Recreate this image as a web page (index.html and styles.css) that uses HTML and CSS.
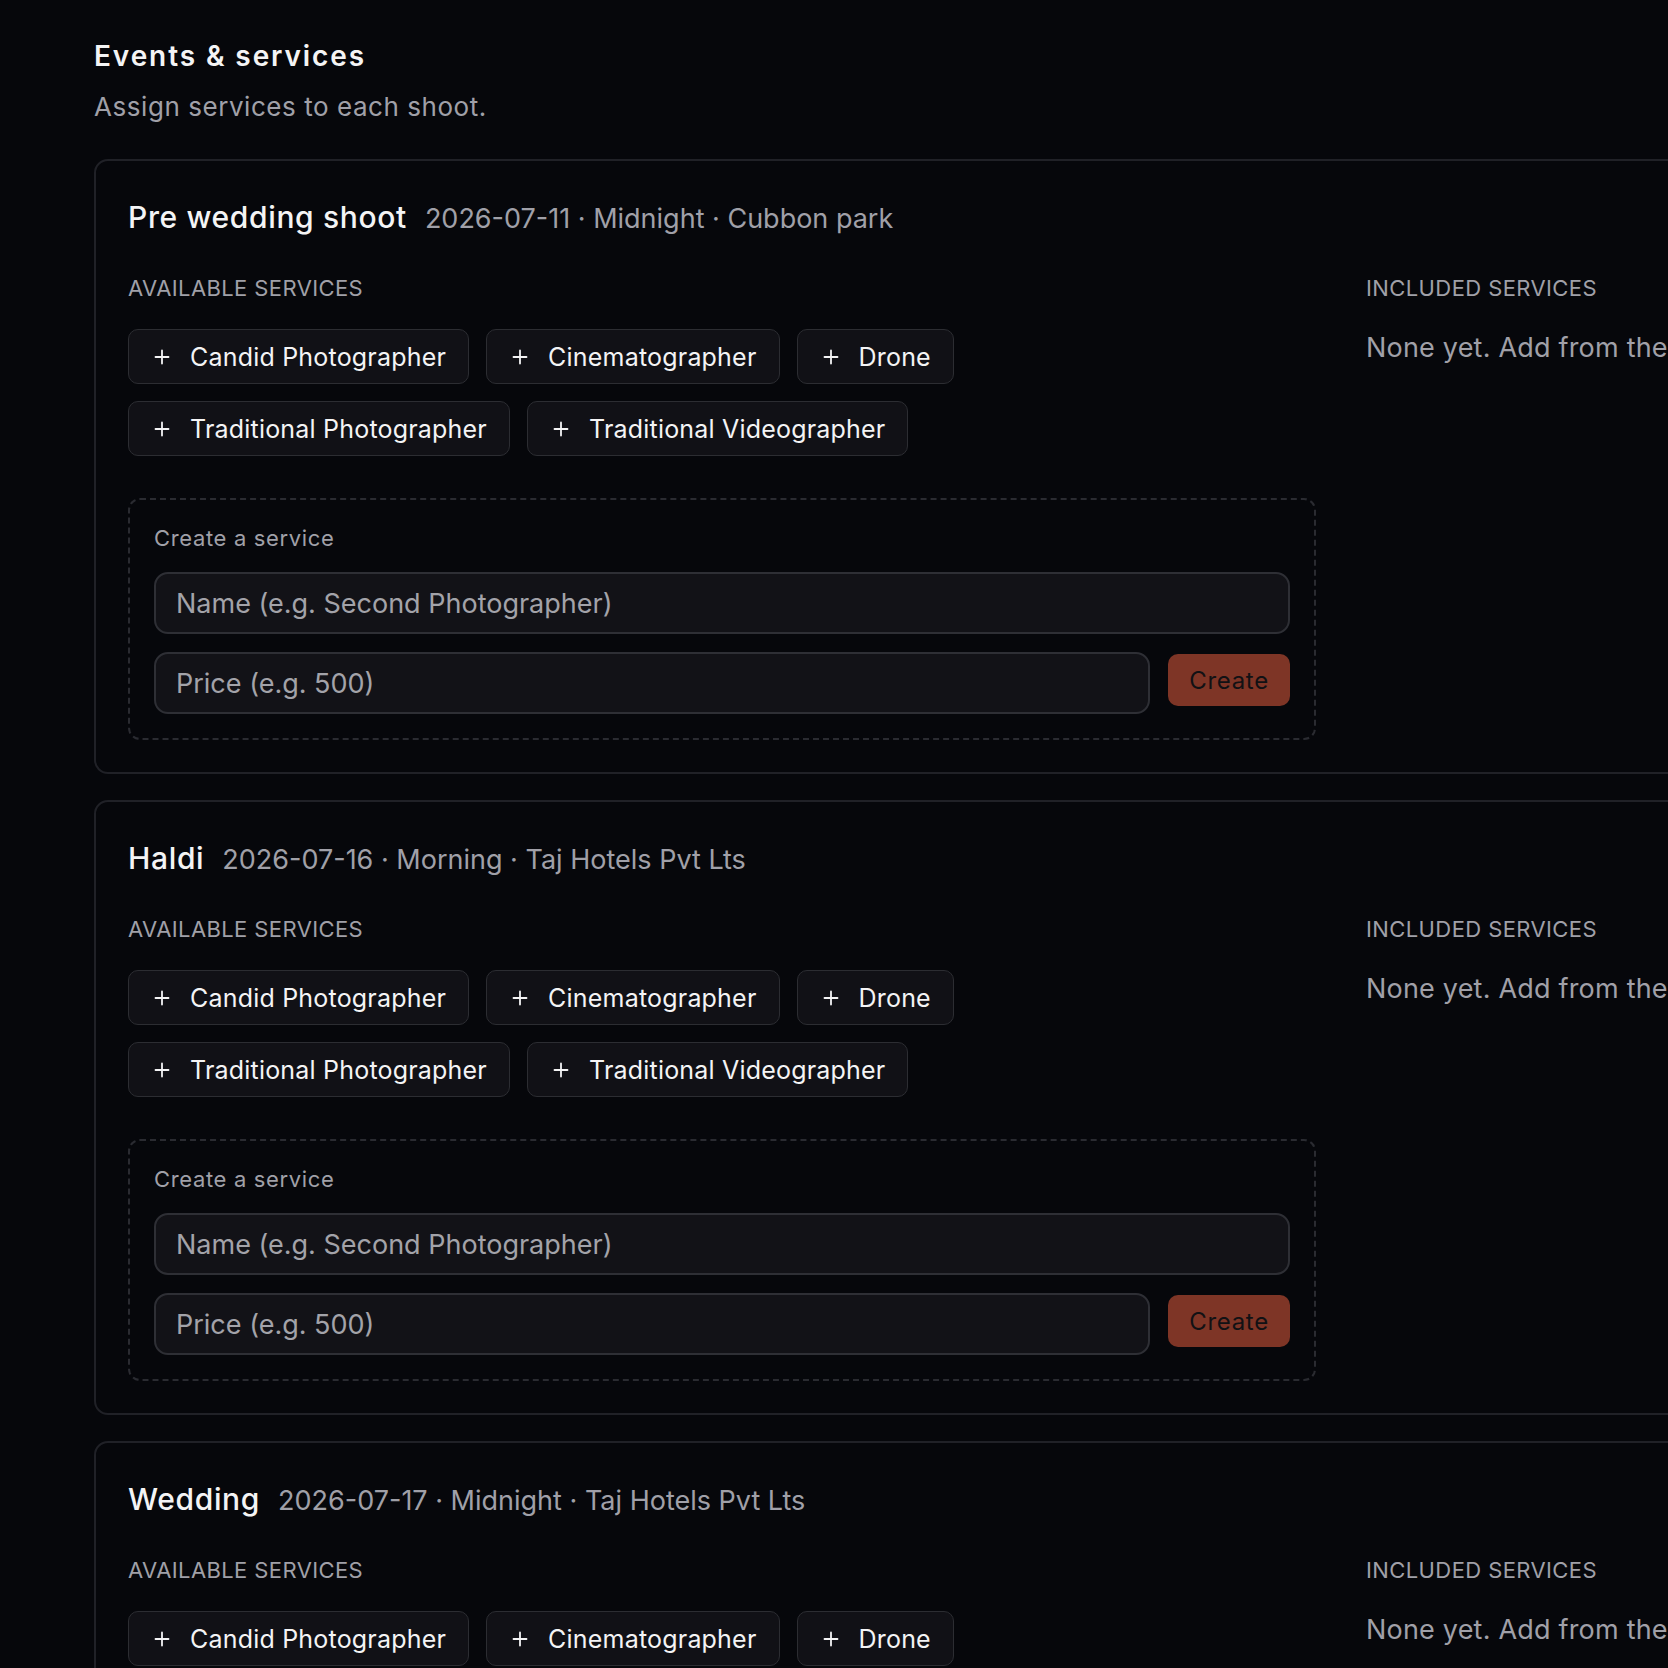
FILE: index.html
```html
<!DOCTYPE html>
<html lang="en">
<head>
    <meta charset="UTF-8">
    <meta name="viewport" content="width=device-width, initial-scale=1.0">
    <title>Events &amp; services</title>
    <link rel="stylesheet" href="styles.css">
    <script>
        const services = [
            'Candid Photographer',
            'Cinematographer',
            'Drone',
            'Traditional Photographer',
            'Traditional Videographer'
        ];

        const events = [
            { name: 'Pre wedding shoot', date: '2026-07-11', slot: 'Midnight', venue: 'Cubbon park' },
            { name: 'Haldi', date: '2026-07-16', slot: 'Morning', venue: 'Taj Hotels Pvt Lts' },
            { name: 'Wedding', date: '2026-07-17', slot: 'Midnight', venue: 'Taj Hotels Pvt Lts' }
        ];

        const plusIcon = `<svg class="plus" width="16" height="16" viewBox="0 0 16 16" fill="none" stroke="currentColor" stroke-width="1.8" stroke-linecap="round"><path d="M8 1.5v13M1.5 8h13"/></svg>`;

        function renderEvents() {
            const list = document.getElementById('eventList');
            list.innerHTML = events.map(ev => `
                <section class="event-card">
                    <div class="event-head">
                        <h2>${ev.name}</h2>
                        <span class="event-meta">${ev.date} · ${ev.slot} · ${ev.venue}</span>
                    </div>
                    <div class="event-body">
                        <div class="available">
                            <h3 class="section-label">Available services</h3>
                            <div class="chips">
                                ${services.map(s => `<button class="chip">${plusIcon}<span>${s}</span></button>`).join('')}
                            </div>
                            <div class="create-box">
                                <p class="create-title">Create a service</p>
                                <input class="field" type="text" placeholder="Name (e.g. Second Photographer)">
                                <div class="price-row">
                                    <input class="field" type="text" placeholder="Price (e.g. 500)">
                                    <button class="create-btn">Create</button>
                                </div>
                            </div>
                        </div>
                        <div class="included">
                            <h3 class="section-label">Included services</h3>
                            <p class="empty">None yet. Add from the list on the left.</p>
                        </div>
                    </div>
                </section>
            `).join('');
        }

        window.onload = renderEvents;
    </script>
</head>
<body>
    <main class="page">
        <h1>Events &amp; services</h1>
        <p class="lead">Assign services to each shoot.</p>
        <div id="eventList"></div>
    </main>
</body>
</html>
```

FILE: styles.css
```css
body {
    font-family: Inter, "Noto Sans", sans-serif;
    margin: 0;
    padding: 0;
    background-color: #06070b;
    color: #f4f4f5;
    overflow: hidden;
}

.page {
    padding: 38px 0 0 94px;
}

.page h1 {
    font-size: 28px;
    line-height: 36px;
    font-weight: 600;
    letter-spacing: 1.9px;
    margin: 0;
}

.lead {
    font-size: 26px;
    line-height: 36px;
    letter-spacing: 0.55px;
    color: #a0a0a8;
    margin: 15px 0 34px;
}

.event-card {
    width: 1800px;
    border: 2px solid #202127;
    border-radius: 14px;
    padding: 36px 32px 32px;
    margin-bottom: 26px;
    box-sizing: border-box;
}

.event-head {
    display: flex;
    align-items: baseline;
    gap: 18px;
}

.event-head h2 {
    font-size: 30px;
    line-height: 40px;
    font-weight: 500;
    letter-spacing: 0.65px;
    margin: 0;
}

.event-meta {
    font-size: 27px;
    color: #a0a0a8;
}

.event-body {
    display: grid;
    grid-template-columns: 1188px 1fr;
    gap: 50px;
    margin-top: 37px;
}

.section-label {
    font-size: 22px;
    line-height: 28px;
    font-weight: 400;
    letter-spacing: 0.4px;
    text-transform: uppercase;
    color: #a0a0a8;
    margin: 0;
}

.chips {
    display: flex;
    flex-wrap: wrap;
    gap: 17px;
    margin-top: 27px;
}

.chip {
    display: inline-flex;
    align-items: center;
    gap: 20px;
    height: 55px;
    padding: 0 22px 0 25px;
    background: #111116;
    border: 1px solid #2c2d32;
    border-radius: 10px;
    color: #f4f4f5;
    font-family: inherit;
    font-size: 25px;
    letter-spacing: 0.2px;
    cursor: pointer;
}

.plus {
    flex-shrink: 0;
}

.create-box {
    margin-top: 42px;
    border: 2px dashed #2a2b31;
    border-radius: 12px;
    padding: 24px;
}

.create-title {
    font-size: 22px;
    line-height: 28px;
    letter-spacing: 0.65px;
    color: #a0a0a8;
    margin: 0 0 20px;
}

.field {
    display: block;
    width: 100%;
    height: 62px;
    box-sizing: border-box;
    padding: 0 18px 0 20px;
    background: #121217;
    border: 2px solid #2e2f35;
    border-radius: 14px;
    color: #f4f4f5;
    font-family: inherit;
    font-size: 27px;
    outline: none;
}

.field::placeholder {
    color: #a3a3a9;
}

.price-row {
    display: flex;
    align-items: flex-start;
    gap: 18px;
    margin-top: 18px;
}

.price-row .field {
    flex: 1;
}

.create-btn {
    margin-top: 2px;
    width: 122px;
    height: 52px;
    background: #7e3526;
    color: #111114;
    border: none;
    border-radius: 10px;
    font-family: inherit;
    font-size: 24px;
    letter-spacing: 0.7px;
    cursor: pointer;
}

.empty {
    font-size: 27px;
    line-height: 34px;
    letter-spacing: 0.2px;
    color: #a0a0a8;
    margin: 29px 0 0;
    white-space: nowrap;
}
```
